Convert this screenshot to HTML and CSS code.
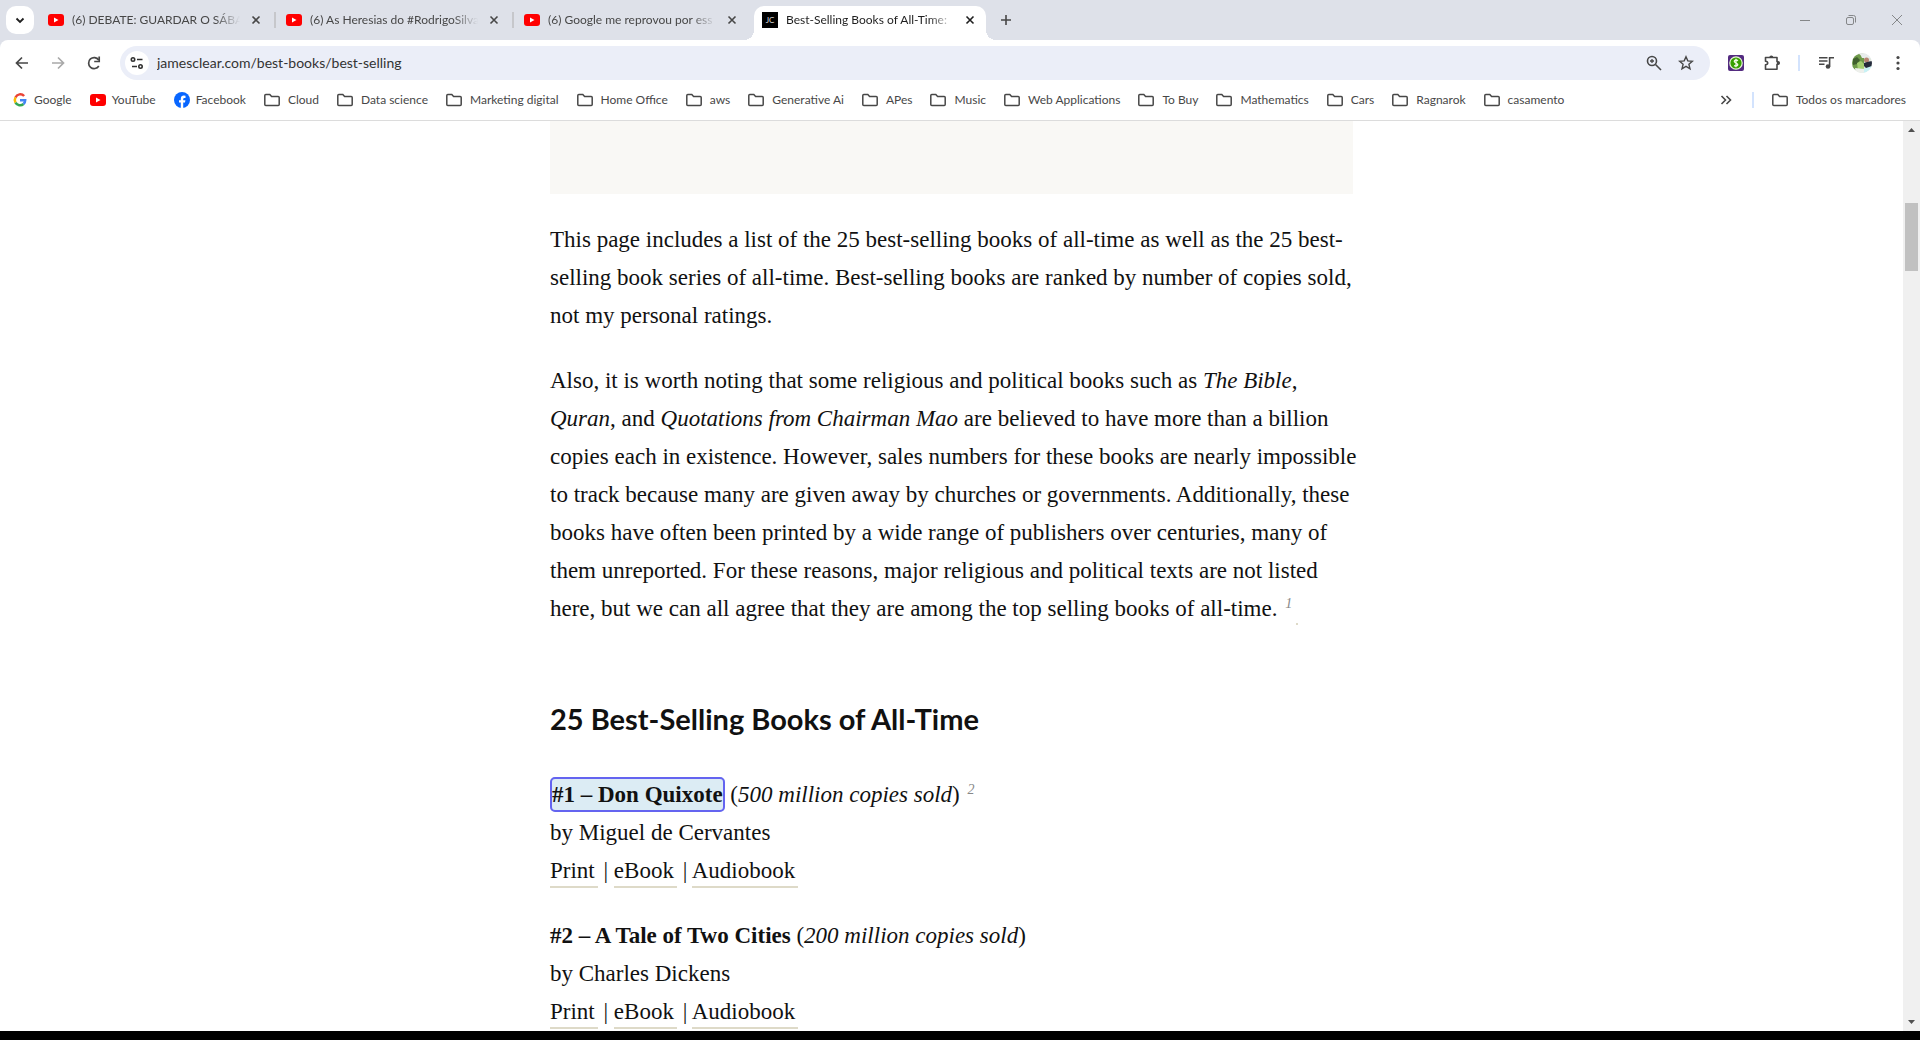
FILE: index.html
```html
<!DOCTYPE html>
<html lang="en">
<head>
<meta charset="utf-8">
<title>Best-Selling Books of All-Time</title>
<link rel="stylesheet" href="styles.css">
</head>
<body>
<svg class="sprite" aria-hidden="true">
  <symbol id="youtube" viewBox="0 0 16 16"><rect y="2" width="16" height="12" rx="3" fill="#f00"/><path d="M6 5.500v5l4.500-2.500z" fill="#fff"/></symbol>
  <symbol id="folder" viewBox="0 0 16 16"><path d="M.8 3.500q0-1 1-1h4l1.800 2h6.600q1 0 1 1v7q0 1-1 1H1.800q-1 0-1-1z" fill="none" stroke="#474747" stroke-width="1.500"/></symbol>
  <symbol id="close" viewBox="0 0 16 16"><path d="M4.500 4.500l7 7M11.500 4.500l-7 7" stroke="currentColor" stroke-width="1.600"/></symbol>
</svg>

<header class="browser">
  <div class="tabstrip">
    <button class="tab-search" aria-label="Search tabs"><svg width="16" height="16" viewBox="0 0 16 16"><path d="M4.500 6.500L8 10l3.500-3.500" fill="none" stroke="#1f1f1f" stroke-width="1.800"/></svg></button>
    <div class="tabs">
      <div class="tab"><svg class="icon"><use href="#youtube"/></svg><span class="tab-title">(6) DEBATE: GUARDAR O SÁBAD</span><button class="tab-close" aria-label="Close tab"><svg class="icon"><use href="#close"/></svg></button></div>
      <div class="tab"><svg class="icon"><use href="#youtube"/></svg><span class="tab-title">(6) As Heresias do #RodrigoSilva</span><button class="tab-close" aria-label="Close tab"><svg class="icon"><use href="#close"/></svg></button></div>
      <div class="tab"><svg class="icon"><use href="#youtube"/></svg><span class="tab-title">(6) Google me reprovou por ess</span><button class="tab-close" aria-label="Close tab"><svg class="icon"><use href="#close"/></svg></button></div>
      <div class="tab active"><span class="jc">JC</span><span class="tab-title">Best-Selling Books of All-Time:</span><button class="tab-close" aria-label="Close tab"><svg class="icon"><use href="#close"/></svg></button></div>
    </div>
    <button class="new-tab" aria-label="New tab"><svg class="icon" viewBox="0 0 16 16"><path d="M8 3v10M3 8h10" stroke="#474747" stroke-width="1.600"/></svg></button>
    <div class="window-controls">
      <button aria-label="Minimize"><svg width="12" height="12" viewBox="0 0 12 12"><path d="M1 6.500h10" stroke="#858789"/></svg></button>
      <button aria-label="Restore"><svg width="12" height="12" viewBox="0 0 12 12"><rect x="1.500" y="3.500" width="7" height="7" rx="1.500" fill="none" stroke="#858789"/><path d="M3.500 1.500h5q2 0 2 2v5" fill="none" stroke="#858789"/></svg></button>
      <button aria-label="Close"><svg width="12" height="12" viewBox="0 0 12 12"><path d="M1 1l10 10M11 1L1 11" stroke="#858789"/></svg></button>
    </div>
  </div>

  <div class="panel">
    <div class="toolbar">
      <button class="tool" aria-label="Back"><svg class="icon" viewBox="0 0 16 16"><path d="M14 8H3M8 2.500L2.500 8 8 13.500" fill="none" stroke="#474747" stroke-width="1.700"/></svg></button>
      <button class="tool" aria-label="Forward"><svg class="icon" viewBox="0 0 16 16"><path d="M2 8h11M8 2.500L13.500 8 8 13.500" fill="none" stroke="#a9a9a9" stroke-width="1.700"/></svg></button>
      <button class="tool" aria-label="Reload"><svg class="icon" viewBox="0 0 16 16"><path d="M12.800 11A5.500 5.500 0 1 1 12.700 5" fill="none" stroke="#474747" stroke-width="1.700"/><path d="M13.200 1.500v5h-5" fill="none" stroke="#474747" stroke-width="1.700"/></svg></button>
      <div class="omnibox">
        <button class="site-info" aria-label="Site information"><svg class="icon" viewBox="0 0 16 16" fill="none" stroke="#303030" stroke-width="1.600"><circle cx="4" cy="4.500" r="1.700"/><path d="M8 4.500h5.500M3 11.500h5"/><circle cx="11.500" cy="11.500" r="1.700"/></svg></button>
        <input class="url" type="text" aria-label="Address" value="jamesclear.com/best-books/best-selling">
        <button class="omni-tool" aria-label="Zoom"><svg class="icon" viewBox="0 0 16 16" fill="none" stroke="#474747" stroke-width="1.600"><circle cx="6" cy="6" r="4.500"/><path d="M9.500 9.500L15 15"/><path d="M6 4v4M4 6h4" stroke-width="1.300"/></svg></button>
        <button class="omni-tool" aria-label="Bookmark this tab"><svg class="icon" viewBox="0 0 16 16"><path d="M8 1.800l1.800 4.100 4.600.4-3.500 3 1.100 4.500L8 11.400l-4 2.400 1.100-4.500-3.500-3 4.600-.4z" fill="none" stroke="#474747" stroke-width="1.400"/></svg></button>
      </div>
      <button class="tool" aria-label="Price extension"><svg class="icon" viewBox="0 0 16 16"><rect width="16" height="16" rx="2" fill="#532b80"/><circle cx="8" cy="8" r="6.200" fill="#37a000" stroke="#e8f5d8" stroke-width="1.200"/><path d="M10 5.800Q8 4.300 6.700 5.500T8 8t1.400 2.400-3.400.2M8 3.800v8.400" fill="none" stroke="#f4fbe8" stroke-width="1.300"/></svg></button>
      <button class="tool" aria-label="Extensions"><svg class="icon" viewBox="0 0 16 16"><path d="M1.500 2.500H13v4.200h.8a1.300 1.300 0 0 1 0 2.600H13v4.900H1.500v-4.400q2.200-.2 2.200-1.800T1.500 6.300z" fill="none" stroke="#474747" stroke-width="1.600" stroke-linejoin="round"/><path d="M5.300 2.500a2 2 0 0 1 4 0zM13 6.200h1a1.800 1.800 0 0 1 0 3.600h-1z" fill="#474747"/></svg></button>
      <span class="divider"></span>
      <button class="tool" aria-label="Media"><svg class="icon" viewBox="0 0 16 16"><path d="M1 2.800h8.500M1 6h8.500M1 9.200h5.500" stroke="#474747" stroke-width="1.600"/><circle cx="10" cy="11.500" r="2.300" fill="#474747"/><path d="M11.600 11.500V2.700H16" fill="none" stroke="#474747" stroke-width="1.600"/></svg></button>
      <button class="tool" aria-label="Profile"><svg width="20" height="20" viewBox="0 0 20 20"><clipPath id="face"><circle cx="10" cy="10" r="10"/></clipPath><g clip-path="url(#face)"><rect width="20" height="20" fill="#dfe6df"/><path d="M0 4l7-3 5 3v10l-6 4-6-3z" fill="#6f9a4a"/><path d="M1 6l4-2 3 3-3 4-4 1z" fill="#40602e"/><path d="M5 10l4-2 3 3v5l-6 1z" fill="#a4cf70"/><path d="M8 1h7l5 4H10z" fill="#e8ecec"/><circle cx="14.500" cy="7" r="2.500" fill="#b78471"/><path d="M12 10l3-1 5-1v5l-5 3-3-3z" fill="#252b3b"/><path d="M11 16l9-3v7h-10z" fill="#c8f2f6"/><path d="M3 15l9 1V20H4z" fill="#eef0ec"/></g></svg></button>
      <button class="tool" aria-label="Menu"><svg class="icon" viewBox="0 0 16 16" fill="#474747"><circle cx="8" cy="2.500" r="1.600"/><circle cx="8" cy="8" r="1.600"/><circle cx="8" cy="13.500" r="1.600"/></svg></button>
    </div>

    <nav class="bookmarks" aria-label="Bookmarks">
      <a class="site" href="#"><svg class="icon" viewBox="0 0 16 16" fill="none" stroke-width="2.500"><path d="M12.100 4A5.200 5.200 0 0 0 3.500 5.400" stroke="#ea4335"/><path d="M3.500 5.400a5.200 5.200 0 0 0 0 5.200" stroke="#fbbc05"/><path d="M3.500 10.600A5.200 5.200 0 0 0 11.500 12" stroke="#34a853"/><path d="M11.500 12A5.200 5.200 0 0 0 13.200 8.200H8" stroke="#4285f4"/></svg>Google</a>
      <a class="site" href="#"><svg class="icon"><use href="#youtube"/></svg>YouTube</a>
      <a class="site" href="#"><svg class="icon" viewBox="0 0 16 16"><circle cx="8" cy="8" r="8" fill="#0866ff"/><path d="M6.800 16v-5.400H5V8.200h1.800V7q0-3.400 3.100-3.400.9 0 1.600.2v2.100h-1q-1.300 0-1.300 1.200v1.100h2.200l-.4 2.400H9.200V16z" fill="#fff"/></svg>Facebook</a>
      <a href="#"><svg class="icon"><use href="#folder"/></svg>Cloud</a>
      <a href="#"><svg class="icon"><use href="#folder"/></svg>Data science</a>
      <a href="#"><svg class="icon"><use href="#folder"/></svg>Marketing digital</a>
      <a href="#"><svg class="icon"><use href="#folder"/></svg>Home Office</a>
      <a href="#"><svg class="icon"><use href="#folder"/></svg>aws</a>
      <a href="#"><svg class="icon"><use href="#folder"/></svg>Generative Ai</a>
      <a href="#"><svg class="icon"><use href="#folder"/></svg>APes</a>
      <a href="#"><svg class="icon"><use href="#folder"/></svg>Music</a>
      <a href="#"><svg class="icon"><use href="#folder"/></svg>Web Applications</a>
      <a href="#"><svg class="icon"><use href="#folder"/></svg>To Buy</a>
      <a href="#"><svg class="icon"><use href="#folder"/></svg>Mathematics</a>
      <a href="#"><svg class="icon"><use href="#folder"/></svg>Cars</a>
      <a href="#"><svg class="icon"><use href="#folder"/></svg>Ragnarok</a>
      <a href="#"><svg class="icon"><use href="#folder"/></svg>casamento</a>
      <button class="more" aria-label="More bookmarks"><svg class="icon" viewBox="0 0 16 16"><path d="M3.500 4l4 4-4 4M8.500 4l4 4-4 4" fill="none" stroke="#474747" stroke-width="1.600"/></svg></button>
      <span class="divider"></span>
      <a href="#"><svg class="icon"><use href="#folder"/></svg>Todos os marcadores</a>
    </nav>
  </div>
</header>

<div class="viewport">
  <main class="page">
    <article class="article">
      <div class="feature"></div>
      <p>This page includes a list of the 25 best-selling books of all-time as well as the 25 best-<br>selling book series of all-time. Best-selling books are ranked by number of copies sold,<br>not my personal ratings.</p>
      <p>Also, it is worth noting that some religious and political books such as <em>The Bible</em>,<br><em>Quran</em>, and <em>Quotations from Chairman Mao</em> are believed to have more than a billion<br>copies each in existence. However, sales numbers for these books are nearly impossible<br>to track because many are given away by churches or governments. Additionally, these<br>books have often been printed by a wide range of publishers over centuries, many of<br>them unreported. For these reasons, major religious and political texts are not listed<br>here, but we can all agree that they are among the top selling books of all-time. <a class="note" href="#">1</a><span class="note-dot"></span></p>
      <h2>25 Best-Selling Books of All-Time</h2>
      <p><strong class="marked">#1 – Don Quixote</strong> (<em>500 million copies sold</em>) <a class="note" href="#">2</a><br>by Miguel de Cervantes<br><a class="link" href="#">Print</a> | <a class="link" href="#">eBook</a> | <a class="link" href="#">Audiobook</a></p>
      <p><strong>#2 – A Tale of Two Cities</strong> (<em>200 million copies sold</em>)<br>by Charles Dickens<br><a class="link" href="#">Print</a> | <a class="link" href="#">eBook</a> | <a class="link" href="#">Audiobook</a></p>
    </article>
  </main>
  <div class="scrollbar">
    <svg width="17" height="17" viewBox="0 0 17 17"><path d="M5 11h7L8.500 7z" fill="#505050"/></svg>
    <div class="track"><div class="thumb"></div></div>
    <svg width="17" height="17" viewBox="0 0 17 17"><path d="M5 6h7l-3.500 4z" fill="#505050"/></svg>
  </div>
</div>
<footer class="bottom-edge"></footer>
</body>
</html>
```
FILE: styles.css
```css
* { box-sizing: border-box; }
body {
  margin: 0;
  height: 100vh;
  display: flex;
  flex-direction: column;
  overflow: hidden;
  background: #fff;
  font: 12px/16px Lato, "Open Sans", sans-serif;
  color: #474747;
}
button {
  display: flex;
  align-items: center;
  justify-content: center;
  padding: 0;
  border: 0;
  background: none;
  color: inherit;
}
svg { flex: none; display: block; }
.sprite { position: absolute; width: 0; height: 0; }
.icon { width: 16px; height: 16px; }

/* Tab strip */
.browser { flex: none; background: #dee1e9; }
.tabstrip { display: flex; height: 40px; padding-left: 6px; align-items: center; }
.tab-search { width: 28px; height: 28px; border-radius: 10px; background: #fff; }
.tabs { display: flex; align-self: stretch; padding: 6px 0 0 2px; }
.tab {
  position: relative;
  display: flex;
  align-items: center;
  gap: 8px;
  width: 238px;
  height: 34px;
  padding: 0 10px 6px 12px;
}
.tab:not(.active)::after {
  content: "";
  position: absolute;
  left: 238px;
  top: 6px;
  width: 2px;
  height: 16px;
  background: #c6c7cb;
}
.tab:nth-child(3)::after { display: none; }
.tab-title {
  flex: 1;
  overflow: hidden;
  white-space: nowrap;
  mask-image: linear-gradient(to right, #000 85%, transparent);
}
.tab-close { width: 16px; height: 16px; }
.active {
  width: 232px;
  margin-left: 4px;
  padding: 0 8px 6px;
  background: #fff;
  border-radius: 10px 10px 0 0;
  color: #1f1f1f;
}
.active::before, .active::after {
  content: "";
  position: absolute;
  bottom: 0;
  width: 10px;
  height: 10px;
}
.active::before { left: -10px; background: radial-gradient(circle at 0 0, transparent 10px, #fff 10px); }
.active::after { right: -10px; background: radial-gradient(circle at 100% 0, transparent 10px, #fff 10px); }
.jc {
  width: 16px;
  height: 16px;
  background: #000;
  color: #ddd;
  font-size: 8px;
  line-height: 16px;
  text-align: center;
}
.new-tab { width: 28px; height: 28px; margin-left: 6px; }
.window-controls { display: flex; margin-left: auto; }
.window-controls button { width: 46px; height: 40px; }

/* Toolbar */
.panel { background: #fff; border-radius: 8px 8px 0 0; border-bottom: 1px solid #dcdcdc; }
.toolbar { display: flex; align-items: center; height: 46px; padding: 0 4px; }
.tool { width: 36px; height: 34px; }
.omnibox {
  flex: 1;
  display: flex;
  align-items: center;
  height: 34px;
  margin: 0 8px;
  padding: 0 8px 0 5px;
  border-radius: 17px;
  background: #ebeef8;
}
.site-info { width: 24px; height: 24px; border-radius: 12px; background: #fff; }
.url {
  flex: 1;
  margin-left: 8px;
  padding: 0;
  border: 0;
  outline: 0;
  background: none;
  font: 14px/20px Lato, "Open Sans", sans-serif;
  color: #333;
}
.omni-tool { width: 32px; height: 32px; }
.divider { width: 2px; height: 16px; background: #d3e3fd; }
.toolbar .divider { margin: 0 8px; }

/* Bookmarks */
.bookmarks { display: flex; align-items: center; height: 34px; padding: 0 14px 6px 12px; gap: 18px; }
.bookmarks a { display: flex; gap: 8px; color: inherit; text-decoration: none; white-space: nowrap; }
.bookmarks .site { gap: 6px; }
.more { margin-left: auto; width: 16px; height: 16px; }

/* Page */
.viewport { flex: 1; min-height: 0; display: flex; }
.page { flex: 1; overflow: hidden; }
.article {
  max-width: 803px;
  margin: 0 auto;
  font: 23px/38px "Liberation Serif", serif;
  color: #111;
  white-space: nowrap;
}
.feature { height: 73px; background: #f9f8f5; }
p { margin: 27px 0; }
h2 { margin: 72px 0 38px; font: bold 29px/38px Lato, sans-serif; }
.marked {
  padding: 5px 2px;
  border-radius: 5px;
  background: #dcecf4;
  outline: 2px solid #6464f0;
  outline-offset: -2px;
}
.note {
  padding-left: 2px;
  font-size: 14px;
  line-height: 14px;
  font-style: italic;
  color: #888;
  text-decoration: none;
  vertical-align: 8px;
}
.note-dot {
  display: inline-block;
  width: 2px;
  height: 2px;
  margin-left: 4px;
  background: #dedac8;
  vertical-align: -9px;
}
.link { padding: 0 3px 3px 0; border-bottom: 2px solid #dedac8; color: inherit; text-decoration: none; }

.scrollbar { flex: none; display: flex; flex-direction: column; width: 17px; background: #f0f0f0; }
.track { flex: 1; padding: 65px 2px 0; }
.thumb { height: 68px; background: #c1c1c1; }
.bottom-edge { flex: none; height: 9px; background: #000; }
```
